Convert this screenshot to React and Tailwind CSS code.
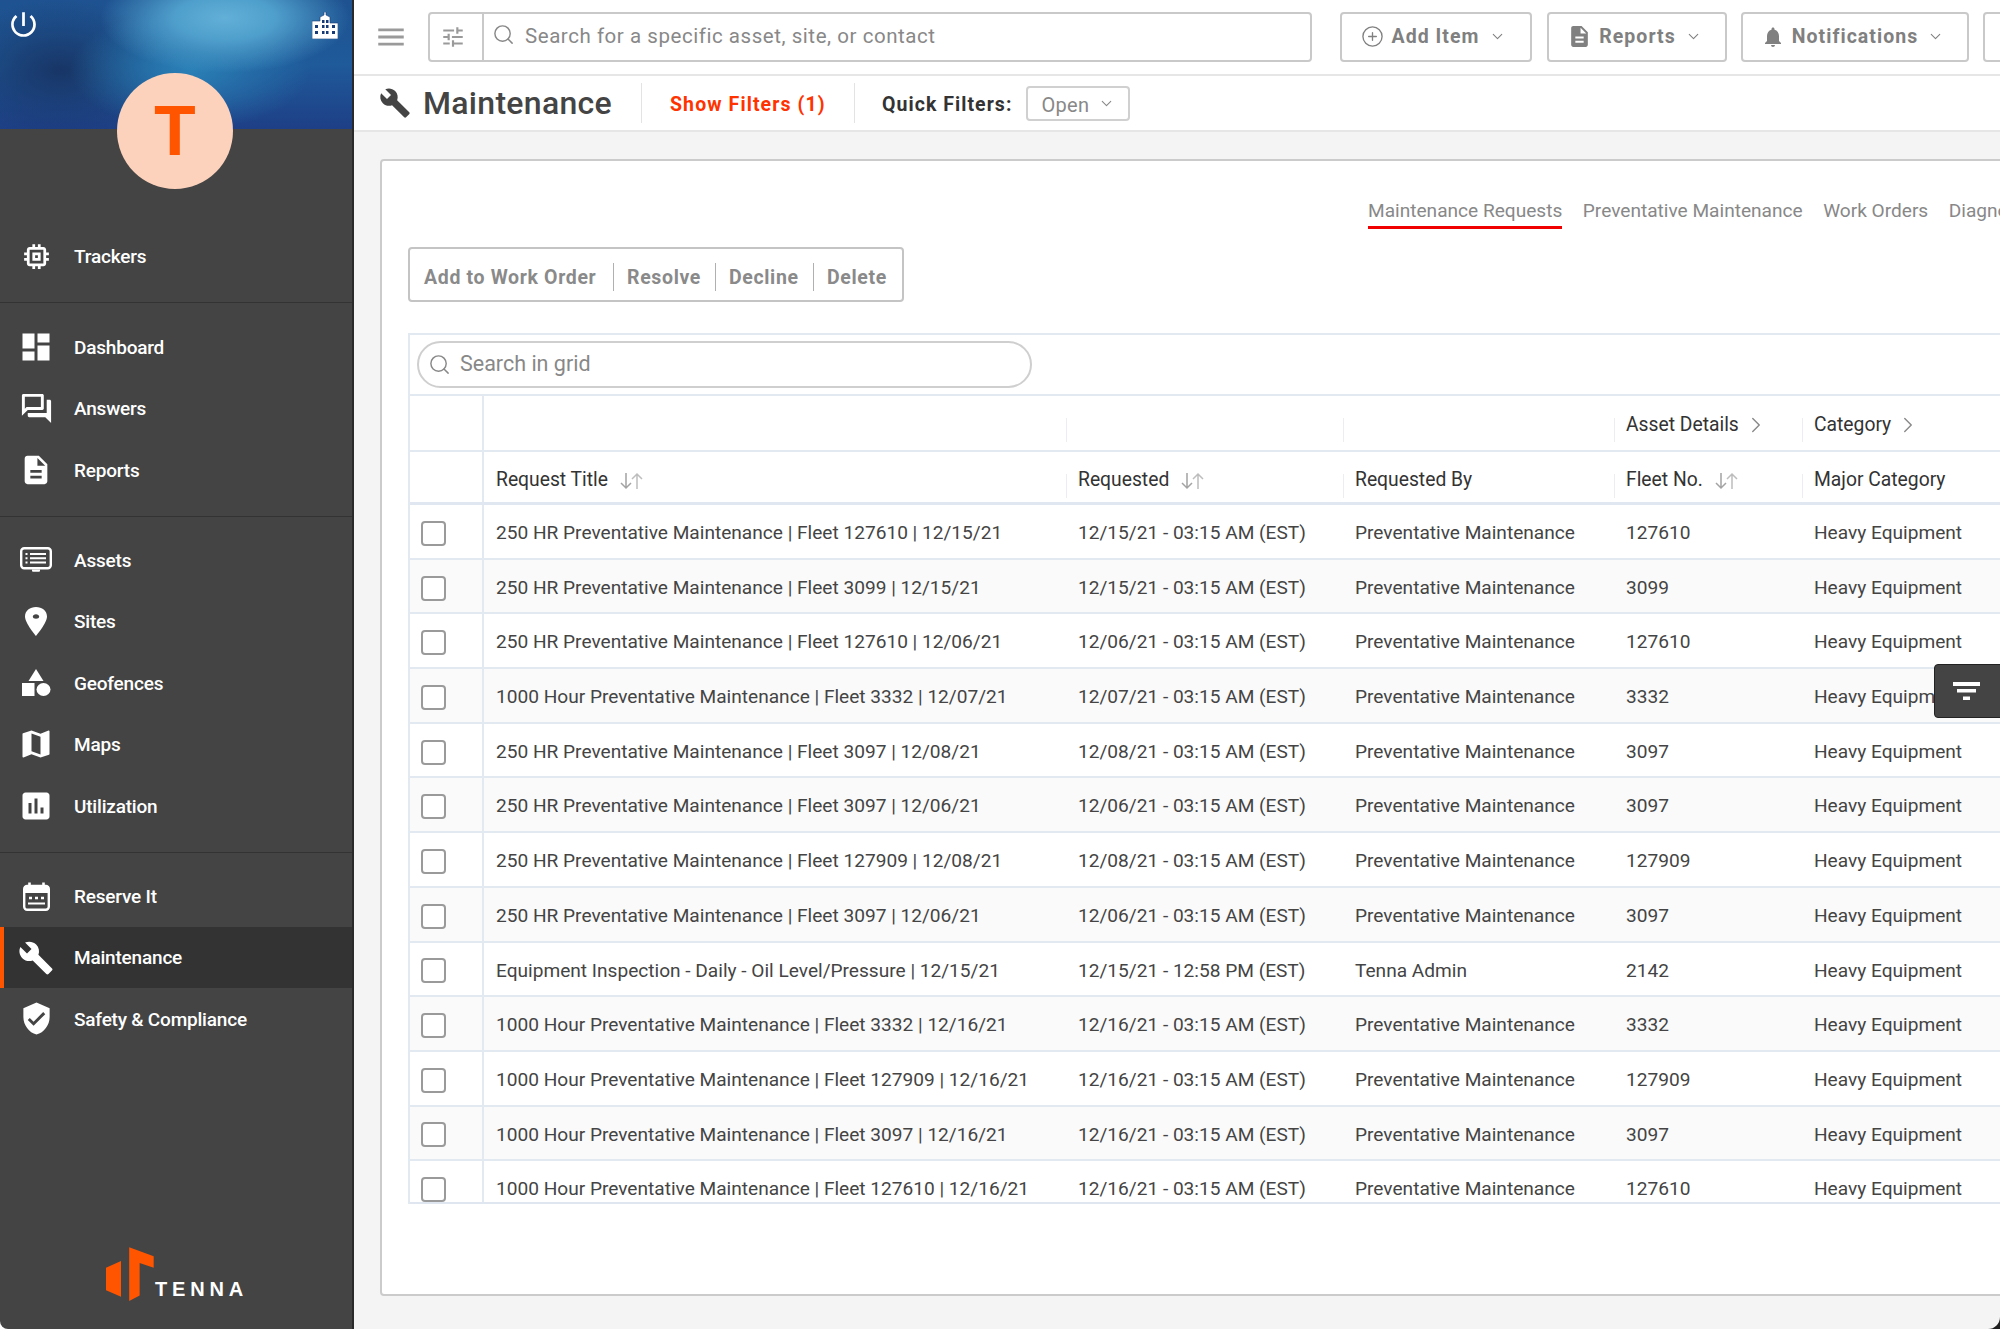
import React from "react";
import {
  MdMemory, MdDashboard, MdOutlineForum, MdDescription, MdMap, MdAssessment,
  MdBuild, MdVerifiedUser, MdPowerSettingsNew, MdMenu, MdTune, MdNotifications,
} from "react-icons/md";
import { ChevronDown, ChevronRight, CirclePlus, Search } from "lucide-react";

const AssetsIcon = () => (
  <svg viewBox="0 0 32 26" className="w-[32px] h-[26px]" fill="none">
    <rect x="1.2" y="1.2" width="29.6" height="20" rx="3" stroke="white" strokeWidth="2.4" />
    <path d="M5.5 7h2M10 7h16M5.5 11.2h2M10 11.2h16M5.5 15.4h2M10 15.4h16" stroke="white" strokeWidth="2" />
    <path d="M12 22.5h8v1.2a1 1 0 0 1-1 1h-6a1 1 0 0 1-1-1z" fill="white" />
  </svg>
);

const PinIcon = () => (
  <svg viewBox="0 0 22 29" className="w-[22px] h-[29px]" fill="white" fillRule="evenodd">
    <path d="M11 0C5 0 0 3.8 0 9.5 0 16 11 29 11 29s11-13 11-19.5C22 3.8 17 0 11 0zm0 7.2c1.8 0 3.2 1 3.2 2.3s-1.4 2.3-3.2 2.3-3.2-1-3.2-2.3 1.4-2.3 3.2-2.3z" />
  </svg>
);

const GeofenceIcon = () => (
  <svg viewBox="0 0 30 28" className="w-[30px] h-[28px]" fill="white">
    <path d="M15 0l7.5 12h-15z" />
    <rect x="1" y="14" width="12.5" height="13" />
    <ellipse cx="22.5" cy="20.5" rx="7" ry="6.5" />
  </svg>
);

const CalendarIcon = () => (
  <svg viewBox="0 0 27 29" className="w-[27px] h-[29px]" fill="none">
    <rect x="1.2" y="4" width="24.6" height="23.8" rx="3" stroke="white" strokeWidth="2.4" />
    <rect x="1.2" y="4" width="24.6" height="7" fill="white" />
    <path d="M6.5 0.5v4M20.5 0.5v4" stroke="white" strokeWidth="2.6" />
    <path d="M6 16h3M12 16h3M18 16h3" stroke="white" strokeWidth="2.6" />
    <path d="M5 21.5h17" stroke="white" strokeWidth="2" />
  </svg>
);

const BuildingIcon = () => (
  <svg viewBox="0 0 26 27" className="w-[26px] h-[27px]">
    <path d="M12 0h2v3l4 2v6h8v16H0V9h8V5l4-2z" fill="white" stroke="#163a78" strokeWidth="0.6" />
    <path d="M3 13h3v3H3zM10 8h2.5v3H10zM14 8h2.5v3H14zM10 13h2.5v3H10zM14 13h2.5v3H14zM20 13h3v3h-3zM3 19h3v3H3zM10 19h2.5v3H10zM14 19h2.5v3H14zM20 19h3v3h-3z" fill="#163a78" />
  </svg>
);

const SortIcon = () => (
  <svg viewBox="0 0 23 18" className="w-[23px] h-[18px] ml-3" fill="none" strokeWidth="1.5">
    <path d="M6 1v15M1 11l5 5 5-5" stroke="#a3a3a3" />
    <path d="M17 17V2M12 7l5-5 5 5" stroke="#bdbdbd" />
  </svg>
);

const FunnelIcon = () => (
  <svg viewBox="0 0 27 18" className="w-[27px] h-[18px]" fill="white">
    <rect x="0" y="0" width="27" height="4" />
    <rect x="4" y="7" width="19" height="3.5" />
    <rect x="10" y="14.5" width="7" height="3.5" />
  </svg>
);

const NavItem = ({ icon, label, active }) => (
  <div className={`relative flex items-center h-[61.4px] ${active ? "bg-[#333333]" : ""}`}>
    {active && <span className="absolute left-0 top-0 bottom-0 w-[4px] bg-[#ff5500]" />}
    <span className="w-[74px] flex items-center justify-center pr-[2px] text-white shrink-0">{icon}</span>
    <span className="pt-[2px] text-[19px] font-medium text-white tracking-[-0.2px]">{label}</span>
  </div>
);

const Sidebar = () => (
  <aside className="w-[354px] h-full shrink-0 flex flex-col bg-[#444444] border-r-2 border-[#2a2a2a] rounded-bl-lg">
    <div className="relative h-[129px] shrink-0 bg-[radial-gradient(ellipse_125px_55px_at_225px_18px,#62b0d8_0%,#4f9fcc_40%,transparent_100%),radial-gradient(ellipse_120px_60px_at_190px_70px,#2a80b6_0%,transparent_100%),radial-gradient(ellipse_120px_70px_at_60px_70px,#183566_0%,transparent_100%),linear-gradient(180deg,#1e5290_0%,#1f5a9a_50%,#1e3f86_100%)]">
      <MdPowerSettingsNew className="absolute left-[7px] top-[8px] text-white" size={33} />
      <div className="absolute left-[312px] top-[12px]"><BuildingIcon /></div>
      <div className="absolute left-[117px] top-[73px] w-[116px] h-[116px] rounded-full bg-[#fdd2bc] flex items-center justify-center text-[69px] font-bold text-[#ff5500] leading-none">
        T
      </div>
    </div>

    <div className="pt-[97px] pb-[15px] border-b border-[#333333]">
      <NavItem icon={<MdMemory size={33} />} label="Trackers" />
    </div>
    <div className="pt-[13px] pb-[15px] border-b border-[#333333]">
      <NavItem icon={<MdDashboard size={36} />} label="Dashboard" />
      <NavItem icon={<MdOutlineForum size={35} />} label="Answers" />
      <NavItem icon={<MdDescription size={34} />} label="Reports" />
    </div>
    <div className="pt-[13px] pb-[15px] border-b border-[#333333]">
      <NavItem icon={<AssetsIcon />} label="Assets" />
      <NavItem icon={<PinIcon />} label="Sites" />
      <NavItem icon={<GeofenceIcon />} label="Geofences" />
      <NavItem icon={<MdMap size={36} />} label="Maps" />
      <NavItem icon={<MdAssessment size={36} />} label="Utilization" />
    </div>
    <div className="pt-[13px]">
      <NavItem icon={<CalendarIcon />} label="Reserve It" />
      <NavItem icon={<MdBuild size={36} />} label="Maintenance" active />
      <NavItem icon={<MdVerifiedUser size={35} />} label="Safety & Compliance" />
    </div>

    <div className="mt-auto pb-[27px] pl-[106px] flex items-end">
      <svg viewBox="137 78 147 168" className="w-[48px] h-[56px]" fill="#ff5500">
        <path d="M137 143l46-21v110l-46-20z" />
        <path d="M208 80l75 28v35l-43-15v100l-32 17z" />
      </svg>
      <span className="ml-[1px] mb-[3px] text-[20px] leading-none font-bold text-white tracking-[4.8px] font-['Liberation_Sans',sans-serif]">TENNA</span>
    </div>
  </aside>
);

const TopButton = ({ icon, label, className }) => (
  <div className={`h-[50px] shrink-0 flex items-center justify-center gap-[7px] pr-[5px] border-2 border-[#c9c9c9] rounded-[4px] text-[#808080] font-bold text-[19.5px] tracking-[1.05px] ${className}`}>
    {icon}
    <span>{label}</span>
    <ChevronDown size={17} strokeWidth={1.5} className="ml-[2px]" />
  </div>
);

const TopBar = () => (
  <div className="h-[76px] shrink-0 bg-white border-b-2 border-[#e6e6e6] flex items-center pl-[20px] pb-[1px]">
    <MdMenu size={34} className="text-[#9a9a9a] shrink-0" />
    <div className="ml-[20px] w-[884px] h-[50px] shrink-0 flex border-2 border-[#c9c9c9] rounded-[4px]">
      <div className="w-[54px] pr-[7px] border-r-2 border-[#c9c9c9] flex items-center justify-center text-[#9a9a9a]">
        <MdTune size={26} />
      </div>
      <div className="flex items-center pl-[8px] gap-[10px] text-[20.5px] text-[#888888] tracking-[0.55px]">
        <Search size={23} strokeWidth={1.5} className="mb-[5px]" />
        <span>Search for a specific asset, site, or contact</span>
      </div>
    </div>
    <TopButton className="ml-[28px] w-[192px]" icon={<CirclePlus size={23} strokeWidth={1.4} />} label="Add Item" />
    <TopButton className="ml-[15px] w-[180px]" icon={<MdDescription size={25} />} label="Reports" />
    <TopButton className="ml-[14px] w-[228px]" icon={<MdNotifications size={24} />} label="Notifications" />
    <div className="ml-[14px] w-[60px] h-[50px] shrink-0 border-2 border-[#c9c9c9] rounded-[4px]" />
  </div>
);

const PageHeader = () => (
  <div className="h-[56px] shrink-0 bg-white border-b-2 border-[#e6e6e6] flex items-center pl-[25px]">
    <MdBuild size={32} className="text-[#444444] shrink-0" />
    <h1 className="ml-[12px] w-[218px] text-[32px] text-[#444444] font-medium tracking-[0.3px]">Maintenance</h1>
    <div className="w-px h-[40px] bg-[#e3e3e3]" />
    <span className="ml-[28px] w-[184px] pt-[3px] text-[19.5px] font-bold text-[#ff3300] tracking-[1.1px]">Show Filters (1)</span>
    <div className="w-px h-[40px] bg-[#e3e3e3]" />
    <span className="ml-[27px] pt-[3px] text-[19.5px] font-bold text-[#333333] tracking-[1.05px]">Quick Filters:</span>
    <div className="ml-[14px] mt-[1px] w-[104px] h-[35px] border-2 border-[#d0d0d0] rounded-[4px] flex items-center pl-[13px] gap-[9px] text-[20px] text-[#888888] tracking-[0.3px]">
      <span className="pt-[2px]">Open</span>
      <ChevronDown size={17} strokeWidth={1.5} />
    </div>
  </div>
);

const tabs = [
  { label: "Maintenance Requests", on: true },
  { label: "Preventative Maintenance" },
  { label: "Work Orders" },
  { label: "Diagnostics" },
];

const Tabs = () => (
  <div className="pl-[986px] pt-[36px] flex gap-[20.5px] whitespace-nowrap">
    {tabs.map((t) => (
      <div key={t.label} className={`h-[32px] text-[19.1px] text-[#888888] ${t.on ? "border-b-[3px] border-[#f00000]" : ""}`}>
        {t.label}
      </div>
    ))}
  </div>
);

const ActionGroup = () => (
  <div className="mt-[18px] ml-[26px] w-[496px] h-[55px] border-2 border-[#c4c4c4] rounded-[4px] flex items-center text-[19.5px] font-bold text-[#8a8a8a] tracking-[0.65px]">
    <span className="pl-[14px] pt-[6px] w-[203px] whitespace-nowrap">Add to Work Order</span>
    <span className="w-px h-[28px] mt-[4px] bg-[#b0b0b0]" />
    <span className="pl-[13px] pt-[6px] w-[101px]">Resolve</span>
    <span className="w-px h-[28px] mt-[4px] bg-[#b0b0b0]" />
    <span className="pl-[13px] pt-[6px] w-[97px]">Decline</span>
    <span className="w-px h-[28px] mt-[4px] bg-[#b0b0b0]" />
    <span className="pl-[13px] pt-[6px]">Delete</span>
  </div>
);

const cols = ["w-[582px]", "w-[277px]", "w-[271px]", "w-[188px]", "w-[300px]"];

const HeadCell = ({ width, divider, className = "pt-[7px]", children }) => (
  <div className={`relative ${width} shrink-0 flex items-center pl-[12px] text-[19.3px] text-[#333333] ${className}`}>
    {divider && <span className="absolute left-0 top-[22px] h-[24px] w-px bg-[#ebedf0]" />}
    {children}
  </div>
);

const GroupHead = () => (
  <div className="flex h-[56px] border-b-2 border-[#e3e9f1]">
    <div className="w-[74px] shrink-0 border-r-2 border-[#e3e9f1]" />
    <HeadCell width={cols[0]} />
    <HeadCell width={cols[1]} divider />
    <HeadCell width={cols[2]} divider />
    <HeadCell width={cols[3]} divider className="pt-[4px]">
      Asset Details
      <ChevronRight size={26} strokeWidth={1.3} className="ml-[4px] text-[#888888]" />
    </HeadCell>
    <HeadCell width={cols[4]} divider className="pt-[4px]">
      Category
      <ChevronRight size={26} strokeWidth={1.3} className="ml-[4px] text-[#888888]" />
    </HeadCell>
  </div>
);

const ColumnHead = () => (
  <div className="flex h-[53px] border-b-[3px] border-[#e0e7f0]">
    <div className="w-[74px] shrink-0 border-r-2 border-[#e3e9f1]" />
    <HeadCell width={cols[0]}>Request Title<SortIcon /></HeadCell>
    <HeadCell width={cols[1]} divider>Requested<SortIcon /></HeadCell>
    <HeadCell width={cols[2]} divider>Requested By</HeadCell>
    <HeadCell width={cols[3]} divider>Fleet No.<SortIcon /></HeadCell>
    <HeadCell width={cols[4]} divider>Major Category</HeadCell>
  </div>
);

const rows = [
  ["250 HR Preventative Maintenance | Fleet 127610 | 12/15/21", "12/15/21 - 03:15 AM (EST)", "Preventative Maintenance", "127610"],
  ["250 HR Preventative Maintenance | Fleet 3099 | 12/15/21", "12/15/21 - 03:15 AM (EST)", "Preventative Maintenance", "3099"],
  ["250 HR Preventative Maintenance | Fleet 127610 | 12/06/21", "12/06/21 - 03:15 AM (EST)", "Preventative Maintenance", "127610"],
  ["1000 Hour Preventative Maintenance | Fleet 3332 | 12/07/21", "12/07/21 - 03:15 AM (EST)", "Preventative Maintenance", "3332"],
  ["250 HR Preventative Maintenance | Fleet 3097 | 12/08/21", "12/08/21 - 03:15 AM (EST)", "Preventative Maintenance", "3097"],
  ["250 HR Preventative Maintenance | Fleet 3097 | 12/06/21", "12/06/21 - 03:15 AM (EST)", "Preventative Maintenance", "3097"],
  ["250 HR Preventative Maintenance | Fleet 127909 | 12/08/21", "12/08/21 - 03:15 AM (EST)", "Preventative Maintenance", "127909"],
  ["250 HR Preventative Maintenance | Fleet 3097 | 12/06/21", "12/06/21 - 03:15 AM (EST)", "Preventative Maintenance", "3097"],
  ["Equipment Inspection - Daily - Oil Level/Pressure | 12/15/21", "12/15/21 - 12:58 PM (EST)", "Tenna Admin", "2142"],
  ["1000 Hour Preventative Maintenance | Fleet 3332 | 12/16/21", "12/16/21 - 03:15 AM (EST)", "Preventative Maintenance", "3332"],
  ["1000 Hour Preventative Maintenance | Fleet 127909 | 12/16/21", "12/16/21 - 03:15 AM (EST)", "Preventative Maintenance", "127909"],
  ["1000 Hour Preventative Maintenance | Fleet 3097 | 12/16/21", "12/16/21 - 03:15 AM (EST)", "Preventative Maintenance", "3097"],
  ["1000 Hour Preventative Maintenance | Fleet 127610 | 12/16/21", "12/16/21 - 03:15 AM (EST)", "Preventative Maintenance", "127610"],
];

const Row = ({ row, striped }) => (
  <div className={`flex h-[54.7px] shrink-0 border-b-2 border-[#e3e9f1] text-[19.1px] text-[#444444] ${striped ? "bg-[#fafafa]" : "bg-white"}`}>
    <div className="w-[74px] shrink-0 border-r-2 border-[#e3e9f1] flex items-center pl-[11px] pt-[4px]">
      <span className="w-[25px] h-[25px] rounded-[4px] border-2 border-[#9a9a9a] bg-white" />
    </div>
    {row.map((text, i) => (
      <div key={i} className={`${cols[i]} shrink-0 flex items-center pl-[12px] pt-[4px] whitespace-nowrap`}>{text}</div>
    ))}
    <div className={`${cols[4]} shrink-0 flex items-center pl-[12px] pt-[4px]`}>Heavy Equipment</div>
  </div>
);

const Grid = () => (
  <div className="relative mt-[31px] ml-[26px] w-[1640px] border-l-2 border-t-2 border-[#e3e9f1]">
    <div className="h-[61px] pl-[7px] flex items-center border-b-2 border-[#e3e9f1] pb-[1px]">
      <div className="w-[615px] h-[47px] rounded-full border-2 border-[#cfcfcf] flex items-center pl-[9px] gap-[9px] text-[21.5px] text-[#888888]">
        <Search size={23} strokeWidth={1.5} />
        <span>Search in grid</span>
      </div>
    </div>
    <GroupHead />
    <ColumnHead />
    <div className="h-[699px] overflow-hidden border-b-2 border-[#dfe6ef]">
      {rows.map((row, i) => (
        <Row key={i} row={row} striped={i % 2 === 1} />
      ))}
    </div>
    <div className="absolute left-[1524px] top-[329px] w-[80px] h-[54px] rounded-l-[4px] bg-[#444444] border border-[#222222] flex items-center pl-[18px]">
      <FunnelIcon />
    </div>
  </div>
);

export default function App() {
  return (
    <div className="w-[2000px] h-[1329px] flex overflow-hidden bg-white font-['Roboto',sans-serif]">
      <Sidebar />
      <div className="flex-1 min-w-0 bg-[#1f1f1f]">
        <main className="h-full flex flex-col bg-[#f4f4f4] overflow-hidden rounded-br-[12px]">
          <TopBar />
          <PageHeader />
          <div className="mt-[27px] ml-[26px] w-[1700px] h-[1137px] shrink-0 bg-white border-2 border-[#cbcbcb] rounded-[4px]">
            <Tabs />
            <ActionGroup />
            <Grid />
          </div>
        </main>
      </div>
    </div>
  );
}
